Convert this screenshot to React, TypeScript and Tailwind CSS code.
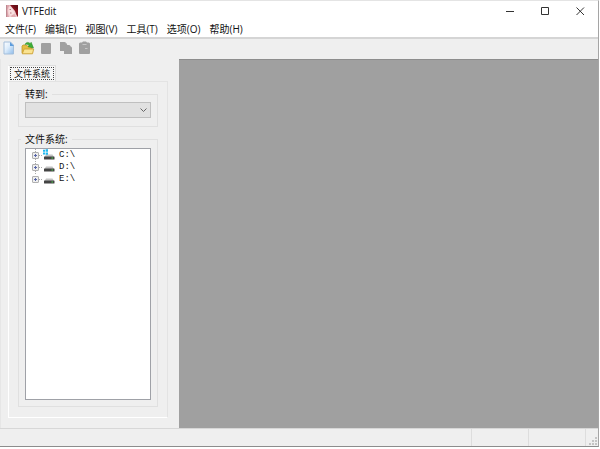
import type { ReactNode } from "react";

const menus = ["文件(F)", "编辑(E)", "视图(V)", "工具(T)", "选项(O)", "帮助(H)"];

const drives = [
  { name: "C:\\", system: true },
  { name: "D:\\", system: false },
  { name: "E:\\", system: false },
];

function AppIcon() {
  return (
    <svg width="12" height="12" viewBox="0 0 12 12">
      <rect width="12" height="12" fill="#f0cdd0" />
      <path d="M4 0h8v12l-1.500-2L9 6 6.500 3z" fill="#86131f" />
      <path d="M6 0h6v5L9 3z" fill="#681018" />
      <path d="M3 2l2 .5 2 2.500 1.500 3L7 10l-3 .5L2.500 7z" fill="#f8dfdf" />
      <path d="M0 0h4L2.500 2 1.500 5 2 9l1 3H0z" fill="#dba3aa" />
      <path d="M5 12l1-2 2.500-1L10 12z" fill="#e3acb1" />
      <path d="M3.500 4.500h1.500M4 8h1.500" stroke="#a34a58" strokeWidth="0.700" />
      <path d="M.5 0v12" stroke="#a97780" strokeWidth="0.600" />
    </svg>
  );
}

function NewIcon() {
  return (
    <svg width="12" height="14" viewBox="0 0 12 14">
      <defs>
        <linearGradient id="sheet" x1="0" y1="0" x2="1" y2="1">
          <stop offset="0" stopColor="#ffffff" />
          <stop offset="0.45" stopColor="#dcecfb" />
          <stop offset="1" stopColor="#8dbbea" />
        </linearGradient>
      </defs>
      <path d="M1 1h6.500L10.500 4v9H1z" fill="url(#sheet)" stroke="#a3bedb" />
      <path d="M7 1l4 4H7z" fill="#5d9cdc" />
    </svg>
  );
}

function OpenIcon() {
  return (
    <svg width="14" height="14" viewBox="0 0 14 14">
      <path d="M1 12V5l1-1h3l1 1h5v7z" fill="#e5bd43" stroke="#c29a2d" strokeWidth="0.800" />
      <path d="M1.200 12.800L3.200 8h9.500l-1.200 4.800z" fill="#fae391" stroke="#cda136" strokeWidth="0.900" />
      <path d="M4 3.500C5 1 7.500 .8 9 2.500l1.200-1.200L12.500 7 7 5.800l1.200-1C7 3.200 5.500 3 4 3.500z" fill="#3eae36" stroke="#278625" strokeWidth="0.500" />
    </svg>
  );
}

function SaveIcon() {
  return (
    <svg width="12" height="12" viewBox="0 0 12 12">
      <rect x="0" y="1" width="10" height="11" rx="1" fill="#a0a0a0" />
    </svg>
  );
}

function CopyIcon() {
  return (
    <svg width="14" height="14" viewBox="0 0 14 14">
      <path d="M1 1h5l2 2v7H1zM5 4h5.500L13 6.500V13H5z" fill="#a0a0a0" />
      <path d="M6 1.500L8 3.500M10.500 4.500L12.500 6.500" stroke="#bcbcbc" strokeWidth="0.600" />
    </svg>
  );
}

function PasteIcon() {
  return (
    <svg width="12" height="14" viewBox="0 0 12 14">
      <path d="M0 2.500l1-1h2L4 .5h3l1 1h2l1 1v10l-1 .5H1l-1-.5z" fill="#a0a0a0" />
      <path d="M3.500 3.500h4M6 7.500h2.500" stroke="#cccccc" strokeWidth="0.900" />
    </svg>
  );
}

function DriveIcon({ system }: { system: boolean }) {
  return (
    <svg width="12" height="12" viewBox="0 0 12 12">
      <path d="M3 5.500h6.500L11 8H1.500z" fill="#c4c4c4" />
      <rect x="1" y="7.500" width="10.500" height="3" rx="0.500" fill="#444444" />
      <rect x="8.500" y="8.500" width="1.500" height="1" fill="#48d348" />
      {system && <path d="M0 .8h2v2H0zM2.600 .3h2.400v2.500H2.600zM0 3.400h2v2H0zM2.600 3.400h2.400v2.400H2.600z" fill="#20b8ef" />}
    </svg>
  );
}

function ExpandIcon({ last }: { last: boolean }) {
  return (
    <svg width="12" height="12" viewBox="0 0 12 12">
      <path d={last ? "M4.500 0v2M8 6.500h4" : "M4.500 0v12M8 6.500h4"} stroke="#aaaaaa" strokeDasharray="1 1" />
      <rect x="1.500" y="3.500" width="6" height="6" rx="0.500" fill="#eeeeee" stroke="#b0b0b0" />
      <path d="M3 6.500h3M4.500 5v3" stroke="#5866a8" />
    </svg>
  );
}

function Group({ title, className = "", children }: { title: string; className?: string; children: ReactNode }) {
  return (
    <fieldset className={`flex min-w-0 flex-col border border-[#e0e0e0] px-1.5 pb-1.5 ${className}`}>
      <legend className="-ml-1 px-1 text-[10px] leading-3">{title}</legend>
      {children}
    </fieldset>
  );
}

export default function App() {
  return (
    <div className="h-screen bg-white pr-px pb-0.5 font-['Open_Sans','Noto_Sans_CJK_SC',sans-serif] text-[#111111]">
      <div className="flex h-full flex-col border-t border-r border-b border-t-[#e4e4e4] border-r-[#a5a5a5] border-b-[#8c8c8c]">
        <header className="flex h-5 shrink-0 items-center pl-1.5">
          <AppIcon />
          <h1 className="ml-1 text-[10px] leading-3">VTFEdit</h1>
          <div className="ml-auto flex">
            <button aria-label="Minimize" className="flex h-5 w-[35px] items-center justify-center">
              <svg width="9" height="9" viewBox="0 0 9 9"><path d="M0 4.500h8" stroke="#333" /></svg>
            </button>
            <button aria-label="Maximize" className="flex h-5 w-[35px] items-center justify-center">
              <svg width="9" height="9" viewBox="0 0 9 9"><path d="M.5 .5h7v7h-7z" fill="none" stroke="#333" /></svg>
            </button>
            <button aria-label="Close" className="flex h-5 w-[35px] items-center justify-center">
              <svg width="9" height="9" viewBox="0 0 9 9"><path d="M.5.5l7.500 7.500M8 .5L.5 8" stroke="#333" /></svg>
            </button>
          </div>
        </header>

        <nav className="flex h-4 shrink-0 items-center gap-[9px] pl-[5px]">
          {menus.map((menu) => (
            <button key={menu} className="text-[10px] leading-4 whitespace-nowrap">{menu}</button>
          ))}
        </nav>

        <div className="flex h-[22px] shrink-0 items-center gap-1.5 border-t-2 border-[#d5d5d5] bg-[#efefef] pb-[3px] pl-[3px]">
          <button aria-label="New"><NewIcon /></button>
          <button aria-label="Open"><OpenIcon /></button>
          <button aria-label="Save" disabled><SaveIcon /></button>
          <button aria-label="Copy" disabled><CopyIcon /></button>
          <button aria-label="Paste" disabled><PasteIcon /></button>
        </div>

        <main className="flex min-h-0 flex-1 bg-[#efefef]">
          <aside className="flex w-[179px] shrink-0 flex-col border-l border-[#e6e6e6] pt-1.5 pr-[11px] pb-2.5 pl-[7px]">
            <button className="h-4 w-12 self-start border-t border-r border-l border-[#dddddd] border-l-white bg-[#f6f6f6] p-px">
              <span className="flex h-full items-center justify-center border border-dotted border-[#444444] text-[9px] leading-3 whitespace-nowrap">文件系统</span>
            </button>
            <div className="flex min-h-0 flex-1 flex-col border border-[#e3e3e3] border-b-white border-l-white px-[9px] pt-1.5 pb-2.5">
              <Group title="转到:" className="pb-2">
                <label className="relative mt-0.5 block">
                  <select aria-label="转到" className="block h-4 w-full appearance-none border border-[#bfbfbf] bg-[#e1e1e1]" />
                  <svg className="pointer-events-none absolute top-1 right-1" width="7" height="8" viewBox="0 0 7 8">
                    <path d="M.5 2.500l3 3 3-3" fill="none" stroke="#666" />
                  </svg>
                </label>
              </Group>
              <Group title="文件系统:" className="mt-1.5 min-h-0 flex-1">
                <ul className="mt-[3px] min-h-0 flex-1 border border-[#9fa1a7] bg-white pl-[5px]">
                  {drives.map((drive, i) => (
                    <li key={drive.name} className="flex h-3 items-center">
                      <ExpandIcon last={i === drives.length - 1} />
                      <DriveIcon system={drive.system} />
                      <span className="ml-1 font-['Liberation_Mono',monospace] text-[9px] leading-3">{drive.name}</span>
                    </li>
                  ))}
                </ul>
              </Group>
            </div>
          </aside>
          <section className="flex-1 border-t border-[#8d8d8d] bg-[#a0a0a0]" />
        </main>

        <footer className="flex h-[18px] shrink-0 justify-end border-t border-[#d7d7d7] bg-[#efefef]">
          <span className="w-[57px] border-l border-[#dddddd]" />
          <span className="w-[57px] border-l border-[#dddddd]" />
          <span className="flex w-[13px] items-end justify-end border-l border-[#dddddd]">
            <svg width="9" height="9" viewBox="0 0 9 9">
              <path d="M6 0h2v2H6zM3 3h2v2H3zM6 3h2v2H6zM0 6h2v2H0zM3 6h2v2H3zM6 6h2v2H6z" fill="#c4c4c4" />
            </svg>
          </span>
        </footer>
      </div>
    </div>
  );
}
